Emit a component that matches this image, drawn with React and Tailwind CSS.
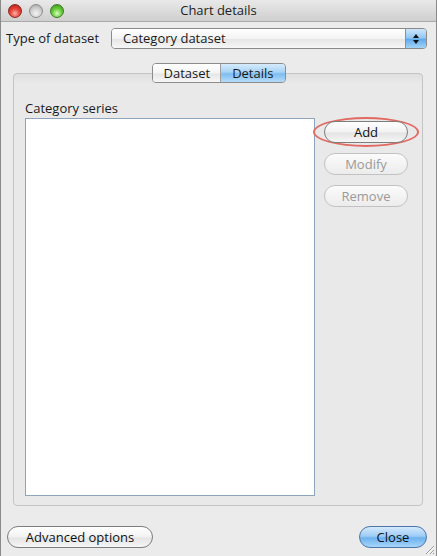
import { useState } from "react";

const font = { fontFamily: '"Open Sans", "DejaVu Sans", sans-serif' };

// Traffic light dot
const Light = ({ tone }) => {
  const tones = {
    red: "bg-[radial-gradient(circle_at_50%_70%,#ffb0a8_0%,#e6443a_45%,#a8170f_100%)] border-[#8e2a24]",
    gray: "bg-[radial-gradient(circle_at_50%_70%,#f4f4f4_0%,#cfcfcf_50%,#9d9d9d_100%)] border-[#8d8d8d]",
    green: "bg-[radial-gradient(circle_at_50%_70%,#d6ffc0_0%,#6ccb3f_45%,#2f8d13_100%)] border-[#3f7a27]",
  };
  return <div className={`h-[14px] w-[14px] rounded-full border ${tones[tone]}`} />;
};

const PillButton = ({ children, disabled, blue, className = "" }) => {
  const skin = blue
    ? "border-[#4a76a8] bg-[linear-gradient(#d3e9fc,#9fcdf5_45%,#6db2ee_55%,#a6d6fa)] text-[#111]"
    : disabled
    ? "border-[#c2c2c2] bg-[linear-gradient(#fbfbfb,#ececec)] text-[#9a9a9a]"
    : "border-[#7d7d7d] bg-[linear-gradient(#ffffff,#f2f2f2_50%,#e4e4e4_55%,#f6f6f6)] text-[#111]";
  return (
    <button
      type="button"
      className={`h-[22px] rounded-full border text-[13px] leading-none flex items-center justify-center ${skin} ${className}`}
    >
      {children}
    </button>
  );
};

export default function App() {
  const [tab, setTab] = useState("Details");

  return (
    <div
      style={font}
      className="relative w-[437px] h-[556px] flex flex-col bg-[#ebebeb] border-x border-[#8a8a8a] text-[#1a1a1a] overflow-hidden"
    >
      {/* title bar */}
      <div className="h-[22px] shrink-0 grid grid-cols-[1fr_auto_1fr] items-center bg-[linear-gradient(#e9e9e9,#cfcfcf)] border-b border-[#a9a9a9]">
        <div className="flex items-center gap-[7px] pl-[7px]">
          <Light tone="red" />
          <Light tone="gray" />
          <Light tone="green" />
        </div>
        <div className="text-[13px] text-[#222]">Chart details</div>
        <div />
      </div>

      {/* dataset type */}
      <div className="mt-[6px] flex items-center h-[21px] pl-[5px] pr-[9px]">
        <span className="text-[13px] w-[105px] shrink-0">Type of dataset</span>
        <div className="flex-1 h-[21px] flex rounded-[4px] border border-[#8a8a8a] overflow-hidden">
          <div className="flex-1 flex items-center pl-[11px] text-[13px] bg-[linear-gradient(#ffffff,#f3f3f3_50%,#e6e6e6_55%,#f6f6f6)]">
            Category dataset
          </div>
          <div className="w-[21px] border-l border-[#6f95c0] flex flex-col items-center justify-center gap-[2px] bg-[linear-gradient(#cfe6fb,#95c8f4_45%,#62aaeb_55%,#a4d4f9)]">
            <div className="w-0 h-0 border-x-[3px] border-x-transparent border-b-[4px] border-b-[#111]" />
            <div className="w-0 h-0 border-x-[3px] border-x-transparent border-t-[4px] border-t-[#111]" />
          </div>
        </div>
      </div>

      {/* tabbed pane */}
      <div className="mt-[14px] ml-[12px] mr-[13px] flex flex-col">
        <div className="relative z-10 flex justify-center">
          <div className="flex h-[20px] rounded-[4px] border border-[#8c8c8c] overflow-hidden text-[13px] ml-[2px]">
            {["Dataset", "Details"].map((t) => (
              <button
                key={t}
                type="button"
                onClick={() => setTab(t)}
                className={
                  t === tab
                    ? "px-[11px] bg-[linear-gradient(#d6ebfc,#a8d3f6_45%,#7ebdf1_55%,#b3dcfb)]"
                    : "px-[10px] border-r border-[#a0a0a0] bg-[linear-gradient(#ffffff,#f4f4f4_50%,#e6e6e6_55%,#f7f7f7)]"
                }
              >
                {t}
              </button>
            ))}
          </div>
        </div>

        <div className="-mt-[10px] h-[433px] rounded-[4px] border border-[#c4c4c4] bg-[linear-gradient(#dfdfdf,#e9e9e9_9px,#e9e9e9)] flex flex-col pl-[11px] pr-[10px] pb-[9px] pt-[26px]">
          <div className="text-[13px] leading-[16px]">Category series</div>
          <div className="mt-[2px] flex-1 flex gap-[9px]">
            <div className="w-[290px] bg-white border border-[#8fa5bd]" />
            <div className="flex flex-col gap-[10px] pt-[3px]">
              <div className="relative">
                <div className="absolute -inset-x-[11px] -inset-y-[4px] rounded-[50%] border-2 border-[#e16a62]" />
                <PillButton className="relative w-[84px]">Add</PillButton>
              </div>
              <PillButton disabled className="w-[84px]">Modify</PillButton>
              <PillButton disabled className="w-[84px]">Remove</PillButton>
            </div>
          </div>
        </div>
      </div>

      {/* bottom buttons */}
      <div className="mt-[20px] flex justify-between pl-[6px] pr-[9px]">
        <PillButton className="w-[146px]">Advanced options</PillButton>
        <PillButton blue className="w-[68px]">Close</PillButton>
      </div>

      {/* resize grip */}
      <svg className="absolute right-[1px] bottom-[1px]" width="12" height="12" viewBox="0 0 12 12">
        <path d="M11 3L3 11M11 7L7 11M11 10L10 11" stroke="#9a9a9a" strokeWidth="1" />
        <path d="M11 4L4 11M11 8L8 11" stroke="#ffffff" strokeWidth="1" />
      </svg>
    </div>
  );
}
